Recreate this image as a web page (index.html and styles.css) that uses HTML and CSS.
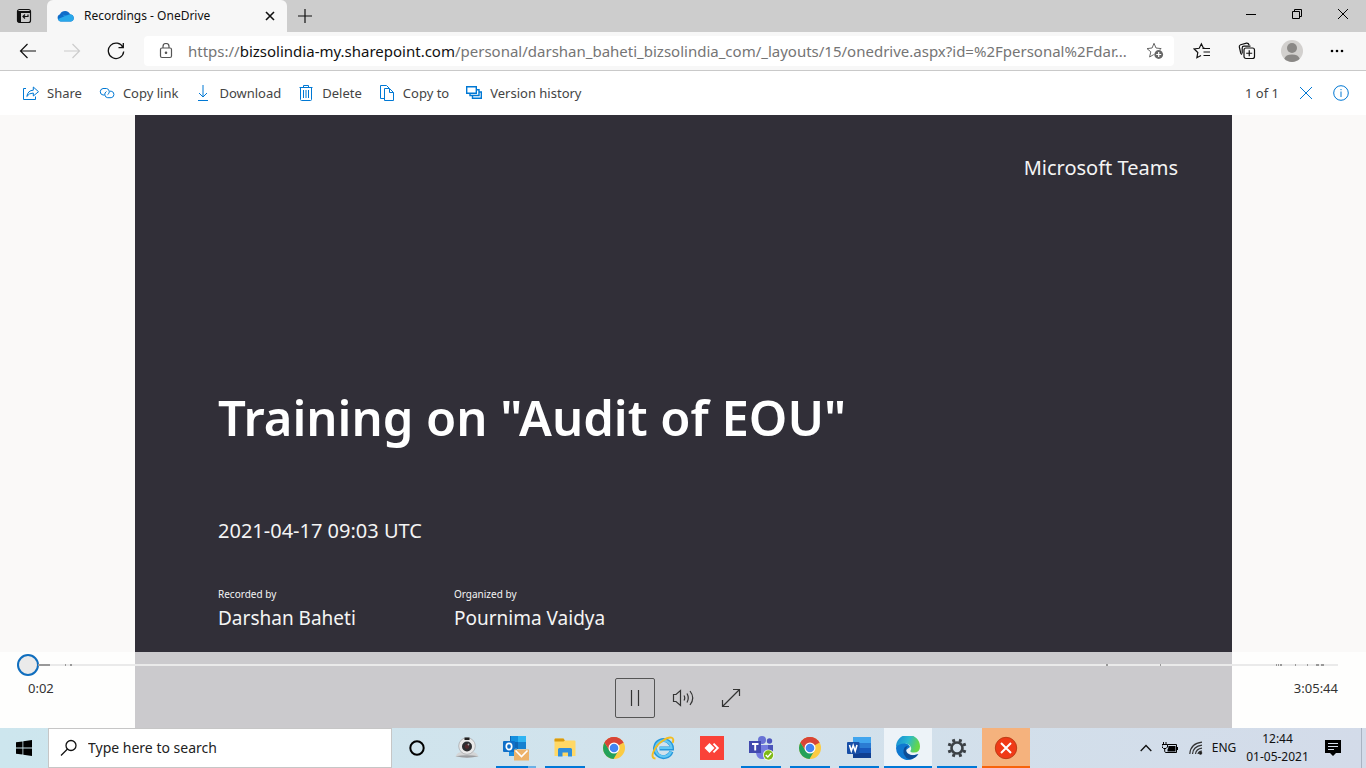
FILE: index.html
```html
<!DOCTYPE html>
<html lang="en">
<head>
<meta charset="utf-8">
<title>Recordings - OneDrive</title>
<link rel="stylesheet" href="styles.css">
</head>
<body>
<svg class="defs" aria-hidden="true">
  <symbol id="chrome" viewBox="0 0 24 24">
    <circle cx="12" cy="12" r="11" fill="#fbcb43"/>
    <path d="M12 12 2.5 6.500A11 11 0 0 1 21.500 6.500z" fill="#d84437"/>
    <path d="M2.500 6.500A11 11 0 0 0 11.500 23L16.500 14.500 12 12 7.500 14.500z" fill="#23a15a"/>
    <path d="M2.500 6.500 7.500 14.500 8 8 21.500 7A11 11 0 0 0 2.500 6.500z" fill="#d84437"/>
    <circle cx="12" cy="12" r="5.500" fill="#fff"/><circle cx="12" cy="12" r="4.300" fill="#4384f3"/>
  </symbol>
</svg>

<header class="tabs">
  <button class="tab-actions" aria-label="Tab actions">
    <svg width="16" height="16" viewBox="0 0 16 16"><rect x="1.500" y="1.500" width="13" height="13" rx="2" fill="none" stroke="#111" stroke-width="1.200"/><path d="M1.500 3H14.500V5H5V14.500H3Q1.500 14.500 1.500 13z" fill="#111"/><path d="M12 6.500V8.500H7M9 6.500 7 8.500l2 2" fill="none" stroke="#111" stroke-width="1.200"/></svg>
  </button>
  <div class="tab">
    <svg width="18" height="12" viewBox="0 0 18 12"><path d="M4 11.500A3.800 3.800 0 0 1 3 4.200 5.600 5.600 0 0 1 13.200 4.400 3.600 3.600 0 0 1 14 11.500z" fill="#0f6cc9"/><path d="M5.500 4.500 12 6 8 8z" fill="#1b88dc"/><path d="M3.500 11.500Q1.500 11 1 9L12 4.500A3.600 3.600 0 0 1 14 11.500z" fill="#28a8ea"/></svg>
    <span class="tab-title">Recordings - OneDrive</span>
    <button aria-label="Close tab"><svg width="10" height="10" viewBox="0 0 10 10"><path d="M1 1 9 9M9 1 1 9" stroke="#111" stroke-width="1.600"/></svg></button>
  </div>
  <button class="new-tab" aria-label="New tab"><svg width="16" height="16" viewBox="0 0 16 16"><path d="M8 1V15M1 8H15" stroke="#111" stroke-width="1.200"/></svg></button>
  <div class="window-buttons">
    <button aria-label="Minimize"><svg width="12" height="12" viewBox="0 0 12 12"><path d="M1 6.500H11" stroke="#000"/></svg></button>
    <button aria-label="Restore"><svg width="12" height="12" viewBox="0 0 12 12"><path d="M1.500 3.500H8.500V10.500H1.500zM3.500 3.500V1.500H10.500V8.500H8.500" fill="none" stroke="#000"/></svg></button>
    <button aria-label="Close"><svg width="12" height="12" viewBox="0 0 12 12"><path d="M1 1 11 11M11 1 1 11" stroke="#000"/></svg></button>
  </div>
</header>

<nav class="address-row">
  <div class="nav-buttons">
    <button aria-label="Back"><svg width="18" height="18" viewBox="0 0 18 18" fill="none" stroke="#111" stroke-width="1.200"><path d="M17 9H1.500M8.500 2 1.500 9l7 7"/></svg></button>
    <button aria-label="Forward" disabled><svg width="18" height="18" viewBox="0 0 18 18" fill="none" stroke="#ccc" stroke-width="1.200"><path d="M1 9H16.500M9.500 2l7 7-7 7"/></svg></button>
    <button aria-label="Refresh"><svg width="18" height="18" viewBox="0 0 18 18" fill="none" stroke="#111" stroke-width="1.300"><path d="M16 5.500A7.700 7.700 0 1 0 16.700 9.500M16.300 1V5.700H11.500"/></svg></button>
  </div>
  <div class="address">
    <svg width="14" height="16" viewBox="0 0 14 16" fill="none" stroke="#555" stroke-width="1.200"><rect x="1.500" y="5" width="11" height="9.500" rx="1.500"/><path d="M4 5V3.500a3 3 0 0 1 6 0V5"/><circle cx="7" cy="9.700" r=".7" fill="#555"/></svg>
    <div class="url" role="textbox" aria-label="Address" contenteditable="true">https://<span class="host">bizsolindia-my.sharepoint.com</span>/personal/darshan_baheti_bizsolindia_com/_layouts/15/onedrive.aspx?id=%2Fpersonal%2Fdar...</div>
    <button aria-label="Add to favorites"><svg width="18" height="18" viewBox="0 0 18 18"><path d="M8 1.300 10 6l5.200.6-3.800 3.200 1 5L8 12.400 3.600 15 4.800 9.800 1 6.600 6.100 6z" fill="none" stroke="#666"/><circle cx="12.700" cy="12.500" r="5" fill="#fff"/><circle cx="12.700" cy="12.500" r="4.400" fill="#666"/><path d="M12.700 10v5M10.200 12.500h5" stroke="#fff" stroke-width="1.200"/></svg></button>
  </div>
  <div class="browser-tools">
    <button aria-label="Favorites"><svg width="18" height="18" viewBox="0 0 18 18" fill="none" stroke="#111" stroke-width="1.200"><path d="M11.500 6H10.300L8.400 1.800 6.200 6.300 1.200 7l3.600 3.500L3.900 15.700 8 13.400M9.500 6.500H17M10.500 10H17M10.500 13.500H17"/></svg></button>
    <button aria-label="Collections"><svg width="18" height="18" viewBox="0 0 18 18" fill="none" stroke="#111" stroke-width="1.200"><path d="M4 12.500Q3 12 2.700 11L1.300 5Q1 3.300 2.600 2.700L8.500 1.200Q10.500 1 11.200 3.200"/><rect x="6" y="6" width="10.500" height="10.500" rx="2" fill="#f7f7f7"/><path d="M4.200 11.500V6Q4.200 4.200 6 4.200H12.500M11.250 8.200v6M8.200 11.250h6"/></svg></button>
    <button aria-label="Profile"><svg width="22" height="22" viewBox="0 0 22 22"><circle cx="11" cy="11" r="11" fill="#d2d0ce"/><circle cx="11" cy="8" r="5" fill="#8a8886"/><path d="M3.300 18.800Q4.500 14.500 11 14.500t7.700 4.300A11 11 0 0 1 3.300 18.800z" fill="#8a8886"/></svg></button>
    <button aria-label="Settings and more"><svg width="14" height="4" viewBox="0 0 14 4"><circle cx="2" cy="2" r="1.300"/><circle cx="7" cy="2" r="1.300"/><circle cx="12" cy="2" r="1.300"/></svg></button>
  </div>
</nav>

<div class="commands" role="toolbar" aria-label="File commands">
  <button><svg width="16" height="16" viewBox="0 0 16 16"><path d="M3 3.500H.500V14.500H12.500V11.500"/><path d="M3.800 11.500Q5 5.200 10.300 5.200V2L15.500 6.700 10.300 11V8Q6 8 3.800 11.500z"/></svg>Share</button>
  <button><svg width="16" height="16" viewBox="0 0 16 16"><path d="M5.500 10H4A3.300 3.300 0 0 1 4 3.500H7.500A3.300 3.300 0 0 1 8.500 9.700M10.700 6.200h1.500a3.300 3.300 0 0 1 0 6.500H8.700A3.300 3.300 0 0 1 7.500 6.500"/></svg>Copy link</button>
  <button><svg width="16" height="16" viewBox="0 0 16 16"><path d="M8 0V12M4 8l4 4 4-4M3 15.500H13"/></svg>Download</button>
  <button><svg width="16" height="16" viewBox="0 0 16 16"><path d="M1.500 2.500H14.500M5.500 2.500V.500H10.500V2.500M2.500 2.500V14.500Q2.500 15.500 3.500 15.500H12.500Q13.500 15.500 13.500 14.500V2.500M5.500 5v8M8 5v8M10.500 5v8"/></svg>Delete</button>
  <button><svg width="16" height="16" viewBox="0 0 16 16"><path d="M5 13.500H1.500V.500H7.500L10 3"/><path d="M5.500 3.500H10.500L14.500 7.500V15.500H5.500zM10.500 3.500V7.500H14.500"/></svg>Copy to</button>
  <button><svg width="16" height="16" viewBox="0 0 16 16"><path d="M.700 1.700H10.300V8.300H.700zM10.300 4.700H13V10.500H4V8.300M13 7H15.300V13.300H6.500V10.500" stroke-width="1.400"/></svg>Version history</button>
  <div class="commands-end">
    <span>1 of 1</span>
    <button aria-label="Close"><svg width="14" height="14" viewBox="0 0 14 14"><path d="M1 1 13 13M13 1 1 13"/></svg></button>
    <button aria-label="Information"><svg width="16" height="16" viewBox="0 0 16 16"><circle cx="8" cy="8" r="7.300"/><path d="M8 6.500V12M8 4V5.200"/></svg></button>
  </div>
</div>

<main class="stage">
  <section class="slide">
    <p class="brand">Microsoft Teams</p>
    <h1>Training on "Audit of EOU"</h1>
    <p class="date">2021-04-17 09:03 UTC</p>
    <dl class="people">
      <div><dt>Recorded by</dt><dd>Darshan Baheti</dd></div>
      <div><dt>Organized by</dt><dd>Pournima Vaidya</dd></div>
    </dl>
  </section>
  <section class="player" aria-label="Player controls">
    <div class="seek">
      <input type="range" min="0" max="11144" value="2" aria-label="Seek">
      <div class="marks">
        <i style="left:0.8%;width:12px"></i><i style="left:2.8%;width:1px"></i><i style="left:3.2%;width:2px"></i><i style="left:82.3%;width:2px"></i><i style="left:86.4%;width:1px"></i><i style="left:95.3%;width:1px"></i><i style="left:95.45%;width:1px"></i><i style="left:95.6%;width:2px"></i><i style="left:96.7%;width:1px"></i><i style="left:97.6%;width:1px"></i><i style="left:98.3%;width:3px"></i><i style="left:98.7%;width:3px"></i>
      </div>
    </div>
    <div class="player-row">
      <time>0:02</time>
      <div class="player-buttons">
        <button class="focused" aria-label="Pause"><svg width="20" height="20" viewBox="0 0 20 20"><path d="M6.500 2V18M13.500 2V18"/></svg></button>
        <button aria-label="Volume"><svg width="24" height="20" viewBox="0 0 24 20"><path d="M2.500 6.500H5L9.500 2.500V17.500L5 13.500H2.500zM13 7.500Q14.500 10 13 12.500M16 5.500Q18.500 10 16 14.500M19 3Q24.500 10 19 17" /></svg></button>
        <button aria-label="Full screen"><svg width="20" height="20" viewBox="0 0 20 20"><path d="M1.500 18.500 18.500 1.500M12 1.500H18.500V8M1.500 12V18.500H8"/></svg></button>
      </div>
      <time>3:05:44</time>
    </div>
  </section>
</main>

<footer class="taskbar">
  <button class="start" aria-label="Start"><svg width="16" height="16" viewBox="0 0 16 16"><path d="M0 2.300 6.500 1.400V7.500H0zM7.300 1.300 16 0V7.500H7.300zM0 8.400H6.500V14.600L0 13.700zM7.300 8.400H16V16L7.300 14.700z"/></svg></button>
  <label class="search">
    <svg width="18" height="18" viewBox="0 0 18 18" fill="none" stroke="#111" stroke-width="1.300"><circle cx="11" cy="6.500" r="5"/><path d="M7.500 10 1 16.500"/></svg>
    <input type="text" placeholder="Type here to search" aria-label="Type here to search">
  </label>
  <div class="apps">
    <button aria-label="Cortana"><svg width="18" height="18" viewBox="0 0 18 18"><circle cx="9" cy="9" r="6.700" fill="none" stroke="#000" stroke-width="2"/></svg></button>
    <button aria-label="Webcam"><svg width="24" height="24" viewBox="0 0 24 24"><path d="M.500 20.500Q2 16.500 6 16H18Q22 16.500 23.500 20.500 12 22.500 .500 20.500z" fill="#d4d5d6"/><path d="M.500 20.300Q12 18 23.500 20.300 12 23 .500 20.300z" fill="#9a9c9f"/><circle cx="12" cy="10" r="8.300" fill="#e9e9e9" stroke="#a9abad" stroke-width=".8"/><path d="M9.500 1.500H14.500V4H9.500z" fill="#222"/><circle cx="12" cy="10.500" r="5" fill="#2c2d30"/><circle cx="12" cy="10.500" r="2.200" fill="#52292c"/><circle cx="13.500" cy="8.500" r=".9" fill="#aaa"/></svg></button>
    <button class="open more" aria-label="Outlook"><svg width="26" height="26" viewBox="0 0 26 26"><path d="M7 1H23V14H7z" fill="#1066b5"/><path d="M8 1h7v6H8z" fill="#1490df"/><path d="M15 1h8v6h-8z" fill="#2fb4f2"/><path d="M15 7h8v7h-8z" fill="#1681d0"/><path d="M6 13H14V21H6z" fill="#1a8de0"/><rect y="6" width="12" height="11" rx="1" fill="#0f70c9"/><ellipse cx="6" cy="11.500" rx="2.700" ry="3.200" fill="none" stroke="#fff" stroke-width="1.700"/><path d="M11 14.500H26V25.500H11z" fill="#edb36a"/><path d="M12.500 15.500 18.500 21.500 24.500 15.500" fill="none" stroke="#fff" stroke-width="1.600"/></svg></button>
    <button class="open" aria-label="File Explorer"><svg width="22" height="22" viewBox="0 0 22 22"><path d="M.500 2.500Q.500 1.500 1.500 1.500H9.500L11 3.500H20.500Q21.500 3.500 21.500 4.500V19H.500z" fill="#ffd865"/><path d="M.500 4.500V2.500Q.500 1.500 1.500 1.500H9.500L10.800 3.500 9.500 4.500z" fill="#d89a10"/><path d="M4 19.500V12.500Q4 11 5.500 11H16.500Q18 11 18 12.500V19.500H14V15.500H8.500V19.500z" fill="#2f8edb"/></svg></button>
    <button aria-label="Chrome"><svg width="24" height="24"><use href="#chrome"/></svg></button>
    <button aria-label="Internet Explorer"><svg width="24" height="24" viewBox="0 0 24 24"><path d="M20.500 15.500A8.500 8.500 0 1 1 21 12.500H8.500" fill="none" stroke="#2697db" stroke-width="4"/><path d="M20 15.500A8 8 0 1 1 20.500 12H9" fill="none" stroke="#63c8f4" stroke-width="2.200"/><path d="M4.500 22.500C-2 22.500 3 10.500 12 4.500 19-.500 24 1 21.700 6.800" fill="none" stroke="#f3bd20" stroke-width="1.900"/></svg></button>
    <button aria-label="AnyDesk"><svg width="24" height="24" viewBox="0 0 24 24"><path fill="#fa4238" d="M0 0h24v24H0z"/><path d="M9.500 7 14.500 12 9.500 17 4.500 12z" fill="#fff"/><path d="M13.500 7.700 17.800 12 13.500 16.300" fill="none" stroke="#fff" stroke-width="1.900"/></svg></button>
    <button class="open" aria-label="Teams"><svg width="26" height="26" viewBox="0 0 26 26"><circle cx="14" cy="5" r="4" fill="#6872d5"/><circle cx="21.500" cy="6" r="2.700" fill="#4d55bd"/><path d="M18 10h7v7q0 4-4 4h-4z" fill="#4b54ba"/><path d="M8 10h12v8q-1 6-6 6t-6-6z" fill="#737be0"/><path d="M1 6h12v12H1z" fill="#4149ae"/><path d="M4 9h6.500M7.200 9v6.500" stroke="#fff" stroke-width="1.900"/><circle cx="20.500" cy="20" r="5.500" fill="#f6ffe8"/><circle cx="20.500" cy="20" r="4.700" fill="#7fb916"/><path d="m17.800 20 2 2 3.500-4" fill="none" stroke="#fff" stroke-width="1.400"/></svg></button>
    <button class="open" aria-label="Chrome"><svg width="24" height="24"><use href="#chrome"/></svg></button>
    <button class="open" aria-label="Word"><svg width="24" height="24" viewBox="0 0 24 24"><path d="M6 1H24V7H6z" fill="#41a5ee"/><path d="M6 7H24V12H6z" fill="#2b7cd3"/><path d="M6 12H24V17H6z" fill="#185abd"/><path d="M6 17H24V22H6z" fill="#103f91"/><rect y="6" width="12.500" height="12" rx="1" fill="#174ea6"/><path d="M2.500 9 4.300 15 6.200 9.500 8.200 15 10 9" fill="none" stroke="#fff" stroke-width="1.600"/></svg></button>
    <button class="full active" aria-label="Edge"><svg width="24" height="24" viewBox="0 0 24 24"><defs><linearGradient id="eg" y2=".3"><stop stop-color="#1487d5"/><stop offset=".55" stop-color="#2bb8cf"/><stop offset="1" stop-color="#65d748"/></linearGradient></defs><path d="M0 12Q1 5 9 7 13 8 14 11L10 14Q9 21 22 18.500A12 12 0 0 1 0 12z" fill="#0f78d0"/><path d="M0 11A12 12 0 0 1 24 10.500Q24 16.500 18 16.500 14.500 16.500 14.300 15 15.500 13.500 15 11.500 13.500 7.500 8.500 7.500 3 7.500 0 11z" fill="url(#eg)"/><path d="M8.500 11.500Q5.500 17 10.500 22 13 24 17 22.500 20.500 21 22.500 18 16 20.500 12 17.500 9.500 15.500 10.500 12 11 10.500 12.500 10 10 9.500 8.500 11.500z" fill="#0d4d97"/></svg></button>
    <button class="open" aria-label="Settings"><svg width="20" height="20" viewBox="0 0 20 20" fill="none" stroke="#3b4045"><circle cx="10" cy="10" r="5.500" stroke-width="2.600"/><path d="M7.200 4.200 6.200 1.200M12.800 4.200 13.800 1.200M7.200 15.800 6.200 18.800M12.800 15.800 13.800 18.800M4.200 7.200 1.200 6.200M4.200 12.800 1.200 13.800M15.800 7.200 18.800 6.200M15.800 12.800 18.800 13.800" stroke-width="3"/></svg></button>
    <button class="full alert" aria-label="Recorder"><svg width="24" height="24" viewBox="0 0 24 24"><circle cx="12" cy="12" r="10.700" fill="#f03a17" stroke="#bd3d15"/><path d="M7 7 17 17M17 7 7 17" stroke="#fff" stroke-width="2"/></svg></button>
  </div>
  <div class="tray">
    <button aria-label="Show hidden icons"><svg width="12" height="8" viewBox="0 0 12 8"><path d="M.700 7 6 1.500 11.300 7" fill="none" stroke="#111" stroke-width="1.300"/></svg></button>
    <button aria-label="Battery"><svg width="17" height="12" viewBox="0 0 17 12"><path d="M5.500 2.500H14.500V10.500H4M15.500 5V8" fill="none" stroke="#000"/><path d="M6.500 4H13.500V9.500H5.500V7.500Q6.500 6.500 6.500 4z"/><path d="M1.500 0V2M4 0V2M0 2.500H5.500V5L4 6.500H1.500L0 5zM2.700 6V9.500Q2.700 10.500 4.500 10.500" fill="none" stroke="#000"/></svg></button>
    <button aria-label="Network"><svg width="14" height="14" viewBox="0 0 14 14" fill="none" stroke="#333" stroke-width="1.200"><path d="M.800 13Q1.500 2.500 13 1.200M3.500 13Q4 5.500 13 4.200M6.500 13Q7 8 13 7.200M9 13Q9.500 10.300 13 10"/><circle cx="11.500" cy="12" r="1.200" fill="#000"/></svg></button>
    <span class="lang">ENG</span>
    <div class="clock"><time>12:44</time><time>01-05-2021</time></div>
    <button aria-label="Notifications"><svg width="16" height="16" viewBox="0 0 16 16"><path d="M0 0H16V13H11L8 16 5 13H0z"/><path d="M3 3.500H13M3 6.500H13M3 9.500H9" stroke="#d5ddeb"/></svg></button>
    <span class="peek"></span>
  </div>
</footer>
</body>
</html>
```
FILE: styles.css
```css
* { box-sizing: border-box; }
body {
  margin: 0;
  height: 100vh;
  display: flex;
  flex-direction: column;
  overflow: hidden;
  background: #faf9f8;
  color: #111;
  font: 14px/20px "Noto Sans", "Open Sans", sans-serif;
}
button {
  margin: 0;
  padding: 0;
  border: 0;
  background: none;
  color: inherit;
  font: inherit;
  display: flex;
  align-items: center;
  justify-content: center;
}
svg { flex: none; display: block; }
p, h1, dl, dd { margin: 0; }
.defs { position: absolute; width: 0; height: 0; }

/* Tab strip */
.tabs { display: flex; height: 32px; background: #cdcdcd; flex: none; }
.tab-actions { width: 47px; }
.tab {
  display: flex;
  align-items: center;
  width: 240px;
  padding: 0 11px 0 10px;
  gap: 9px;
  background: #f7f7f7;
  border-radius: 6px 6px 0 0;
  font-size: 12px;
}
.tab-title { flex: 1; }
.tab button { width: 12px; height: 20px; }
.new-tab { width: 35px; }
.window-buttons { display: flex; margin-left: auto; }
.window-buttons button { width: 46px; height: 28px; }

/* Address row */
.address-row {
  display: flex;
  align-items: center;
  flex: none;
  height: 39px;
  background: #f7f7f7;
  border-bottom: 1px solid #c9c9c9;
}
.nav-buttons { display: flex; width: 144px; padding-left: 6px; }
.nav-buttons button { width: 44px; height: 32px; }
.address {
  flex: 1;
  min-width: 0;
  display: flex;
  align-items: center;
  height: 30px;
  padding: 0 10px 0 15px;
  background: #fff;
  border-radius: 4px;
}
.url {
  flex: 1;
  min-width: 0;
  margin: 0 12px 0 15px;
  overflow: hidden;
  white-space: nowrap;
  text-overflow: ellipsis;
  font-size: 15px;
  color: #757575;
}
.host { color: #111; }
.browser-tools { display: flex; width: 192px; padding-left: 5px; }
.browser-tools button { width: 45px; height: 32px; }

/* File commands */
.commands {
  display: flex;
  align-items: center;
  flex: none;
  height: 44px;
  padding: 0 17px 0 23px;
  gap: 17px;
  background: #fff;
  color: #444;
  font-size: 13px;
}
.commands button { gap: 8px; }
.commands svg { fill: none; stroke: #0078d4; stroke-width: 1; }
.commands-end { display: flex; align-items: center; gap: 20px; margin-left: auto; }

/* Video stage */
.stage { position: relative; flex: 1; display: flex; padding: 0 134px 0 135px; }
.slide {
  flex: 1;
  padding: 37px 54px 0 83px;
  background: #312f38;
  color: #f4f4f4;
  font-size: 20px;
  line-height: 32px;
}
.brand { text-align: right; }
.slide h1 { margin-top: 197px; color: #fff; font-size: 49px; line-height: 72px; font-weight: 600; }
.date { margin-top: 62px; }
.people { display: flex; margin-top: 39px; font-size: 19px; }
.people div { width: 236px; white-space: nowrap; }
.people dt { font-size: 10px; line-height: 16px; }

/* Player */
.player {
  position: absolute;
  inset: auto 0 0 0;
  height: 76px;
  padding: 2px 28px 0 17px;
  background: rgba(255, 255, 255, .75);
  color: #333;
}
.seek { position: relative; height: 22px; }
.seek input {
  appearance: none;
  display: block;
  width: 100%;
  height: 22px;
  margin: 0;
  background: linear-gradient(#eaeaea, #eaeaea) 11px 10px / 100% 2px no-repeat;
}
.seek input::-webkit-slider-thumb {
  appearance: none;
  width: 22px;
  height: 22px;
  border: 2px solid #106ebe;
  border-radius: 50%;
  background: #eaeaea;
}
.marks { position: absolute; inset: 10px 0 10px 11px; pointer-events: none; }
.marks i { position: absolute; top: 0; height: 2px; background: #999; }
.player-row {
  display: grid;
  grid-template-columns: 1fr auto 1fr;
  padding-left: 11px;
  font-size: 13px;
  line-height: 24px;
}
.player-row time:last-child { text-align: right; }
.player-buttons { display: flex; gap: 8px; padding-top: 2px; }
.player-buttons button { width: 40px; height: 40px; border: 1px solid transparent; border-radius: 2px; }
.player-buttons .focused { border-color: #555; }
.player-buttons svg { fill: none; stroke: #333; stroke-width: 1.2; }

/* Taskbar */
.taskbar {
  display: flex;
  flex: none;
  height: 40px;
  background: linear-gradient(90deg, #cde6ee, #d2e2ec 55%, #d3dbe9);
}
.start { width: 48px; }
.search {
  display: flex;
  align-items: center;
  width: 344px;
  padding-left: 11px;
  gap: 10px;
  background: #fff;
  border: 1px solid #c6c6c6;
}
.search input {
  flex: 1;
  min-width: 0;
  padding: 0;
  border: 0;
  outline: 0;
  background: none;
  font: inherit;
}
.search input::placeholder { color: #222; opacity: 1; }
.apps { display: flex; gap: 1px; }
.apps button { position: relative; width: 48px; }
.apps button:first-child { width: 50px; }
.open::after, .full::after {
  content: "";
  position: absolute;
  inset: auto 4px 0 4px;
  height: 2px;
  background: #0078d7;
}
.more::after { background: linear-gradient(90deg, #0078d7 32px, #6ab0e6 32px); }
.full::after { left: 0; right: 0; }
.active { background: #edf3f8; }
.alert { background: #f5b27d; }
.alert::after { background: #f7630c; }
.tray { display: flex; align-items: center; margin-left: auto; font-size: 12px; line-height: 18px; }
.tray button { width: 25px; height: 40px; }
.lang { width: 32px; text-align: center; }
.clock { display: grid; width: 75px; text-align: center; }
.tray .clock + button { width: 36px; margin-right: 10px; }
.peek { width: 5px; height: 40px; border-left: 1px solid #aab3c2; }
```
